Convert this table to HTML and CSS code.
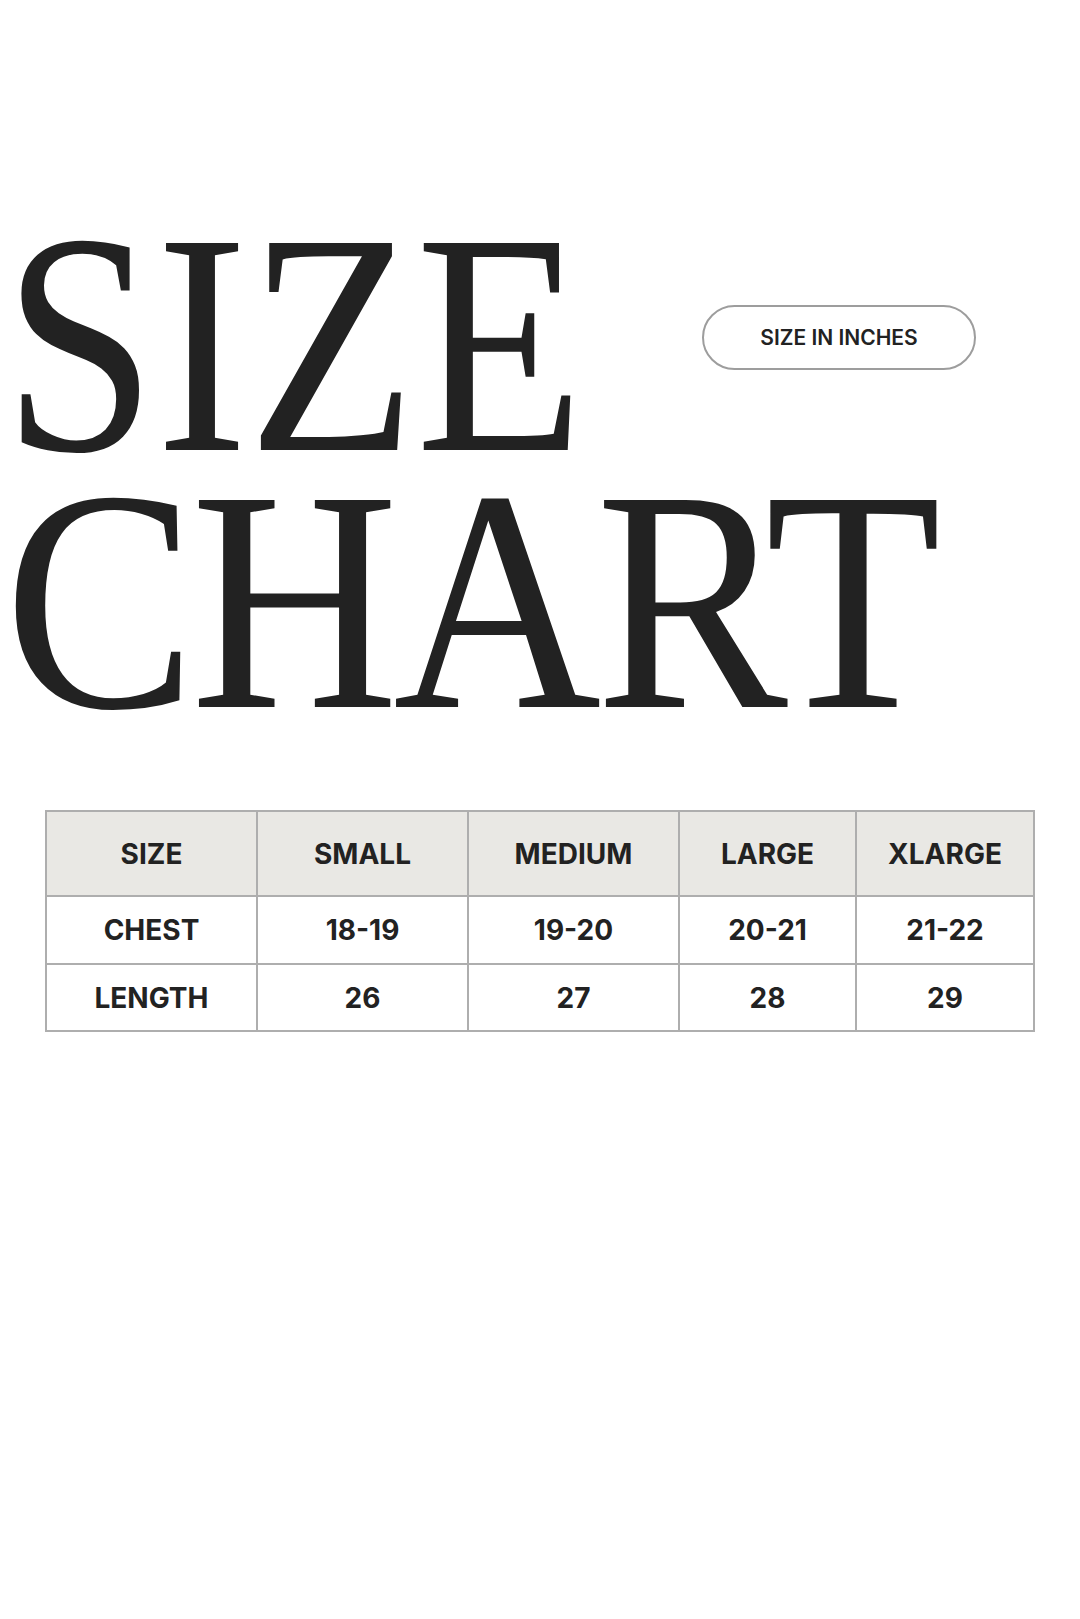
FILE: index.html
```html
<!DOCTYPE html>
<html lang="en">
<head>
<meta charset="utf-8">
<title>Size Chart</title>
<link rel="stylesheet" href="styles.css">
</head>
<body>
<main class="page">
  <header class="title">
    <div class="title-row">
      <h1 class="word word-size"><span class="glyphs">SIZE</span></h1>
      <span class="pill">SIZE IN INCHES</span>
    </div>
    <div class="word word-chart"><span class="glyphs">CHART</span></div>
  </header>
  <table class="chart">
    <colgroup>
      <col class="c1"><col class="c2"><col class="c3"><col class="c4"><col class="c5">
    </colgroup>
    <thead>
      <tr class="head"><th>SIZE</th><th>SMALL</th><th>MEDIUM</th><th>LARGE</th><th>XLARGE</th></tr>
    </thead>
    <tbody>
      <tr class="r1"><td>CHEST</td><td>18-19</td><td>19-20</td><td>20-21</td><td>21-22</td></tr>
      <tr class="r2"><td>LENGTH</td><td>26</td><td>27</td><td>28</td><td>29</td></tr>
    </tbody>
  </table>
</main>
</body>
</html>
```

FILE: styles.css
```css
html, body {
  margin: 0;
  padding: 0;
  background: #ffffff;
}
body {
  width: 1080px;
  height: 1619px;
  overflow: hidden;
  color: #222222;
  font-family: Inter, "Noto Sans", "Liberation Sans", sans-serif;
}
.page {
  display: flex;
  flex-direction: column;
}
.title {
  padding-top: 215px;
  display: flex;
  flex-direction: column;
}
.title-row {
  display: flex;
  align-items: flex-start;
}
.word {
  margin: 0;
  font-family: "Liberation Serif", "Times New Roman", serif;
  font-weight: 400;
  font-size: 316px;
  line-height: 257px;
  height: 257px;
  color: #222222;
  white-space: nowrap;
}
.glyphs {
  display: inline-block;
  transform-origin: 0 50%;
}
.word-size {
  flex: 0 0 702px;
  padding-left: 3px;
  box-sizing: border-box;
}
.word-size .glyphs {
  transform: scaleX(0.871);
}
.word-chart {
  padding-left: 4px;
}
.word-chart .glyphs {
  letter-spacing: -6px;
  transform: scaleX(0.9116);
}
.pill {
  margin-top: 90px;
  width: 274px;
  height: 65px;
  box-sizing: border-box;
  border: 2px solid #9d9d9d;
  border-radius: 33px;
  display: flex;
  align-items: center;
  justify-content: center;
  font-size: 21px;
  font-weight: 600;
  color: #222222;
  letter-spacing: 0;
}
.chart {
  margin-top: 81px;
  margin-left: 45px;
  width: 988px;
  border-collapse: collapse;
  table-layout: fixed;
}
.c1, .c2, .c3 { width: 211px; }
.c4 { width: 177px; }
.c5 { width: 178px; }
.chart th, .chart td {
  border: 2px solid #aeaeae;
  padding: 0;
  text-align: center;
  vertical-align: middle;
  font-size: 28px;
  font-weight: 700;
  color: #222222;
}
.head th { background: #e9e8e4; height: 83px; }
.r1 td { height: 66px; }
.r2 td { height: 65px; }
```
